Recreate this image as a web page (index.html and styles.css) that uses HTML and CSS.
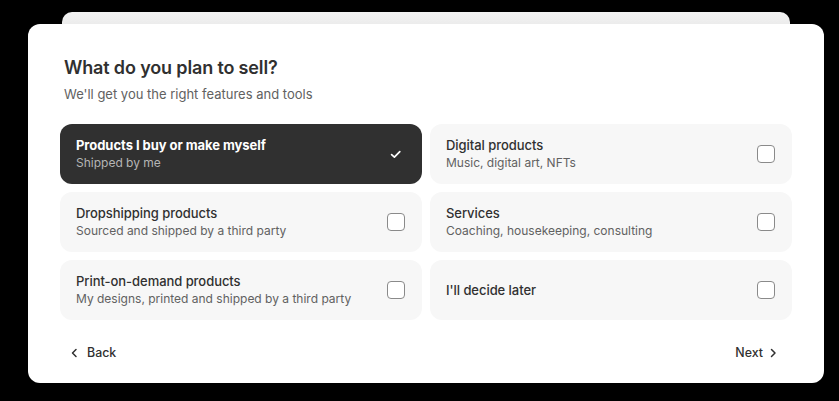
FILE: index.html
```html
<!DOCTYPE html>
<html lang="en">
<head>
<meta charset="utf-8">
<title>What do you plan to sell?</title>
<link rel="stylesheet" href="styles.css">
</head>
<body>
<div class="stack">
  <div class="back-card"></div>
  <div class="card">
    <h1 class="title">What do you plan to sell?</h1>
    <p class="subtitle">We'll get you the right features and tools</p>
    <div class="options">
      <div class="option selected">
        <div class="text">
          <div class="opt-title">Products I buy or make myself</div>
          <div class="opt-sub">Shipped by me</div>
        </div>
        <span class="mark">
          <svg viewBox="0 0 20 20" width="20" height="20"><path d="M5.6 10.6l2.8 2.6 5.4-5.6" fill="none" stroke="#fff" stroke-width="1.7" stroke-linecap="round" stroke-linejoin="round"/></svg>
        </span>
      </div>
      <div class="option">
        <div class="text">
          <div class="opt-title">Digital products</div>
          <div class="opt-sub">Music, digital art, NFTs</div>
        </div>
        <span class="mark"><span class="box"></span></span>
      </div>
      <div class="option">
        <div class="text">
          <div class="opt-title">Dropshipping products</div>
          <div class="opt-sub">Sourced and shipped by a third party</div>
        </div>
        <span class="mark"><span class="box"></span></span>
      </div>
      <div class="option">
        <div class="text">
          <div class="opt-title">Services</div>
          <div class="opt-sub">Coaching, housekeeping, consulting</div>
        </div>
        <span class="mark"><span class="box"></span></span>
      </div>
      <div class="option">
        <div class="text">
          <div class="opt-title">Print-on-demand products</div>
          <div class="opt-sub">My designs, printed and shipped by a third party</div>
        </div>
        <span class="mark"><span class="box"></span></span>
      </div>
      <div class="option">
        <div class="text">
          <div class="opt-title">I'll decide later</div>
        </div>
        <span class="mark"><span class="box"></span></span>
      </div>
    </div>
    <div class="footer">
      <button class="nav back">
        <svg viewBox="0 0 8 12" width="8" height="12"><path d="M6 2.5L2.5 6 6 9.5" fill="none" stroke="#303030" stroke-width="1.5" stroke-linecap="round" stroke-linejoin="round"/></svg>
        <span>Back</span>
      </button>
      <button class="nav next">
        <span>Next</span>
        <svg viewBox="0 0 8 12" width="8" height="12"><path d="M2.5 2.5L6 6 2.5 9.5" fill="none" stroke="#303030" stroke-width="1.5" stroke-linecap="round" stroke-linejoin="round"/></svg>
      </button>
    </div>
  </div>
</div>
</body>
</html>
```
FILE: styles.css
```css
* { box-sizing: border-box; }
html, body { margin: 0; padding: 0; }
body {
  background: #000;
  font-family: Inter, "Noto Sans", "Liberation Sans", sans-serif;
  color: #303030;
  width: 839px;
  height: 401px;
  overflow: hidden;
}
.stack {
  padding: 12px 15px 0 28px;
}
.back-card {
  height: 12px;
  margin: 0 34px 0 34px;
  border-radius: 10px 10px 0 0;
  background: linear-gradient(#f3f3f3, #ececec);
}
.card {
  width: 796px;
  height: 359px;
  background: #fff;
  border-radius: 12px;
  padding: 32px 32px 0 32px;
}
.title {
  margin: 0 0 0 4px;
  font-size: 18px;
  line-height: 24px;
  font-weight: 600;
  letter-spacing: -0.15px;
  color: #303030;
}
.subtitle {
  margin: 4px 0 0 4px;
  font-size: 13px;
  line-height: 20px;
  color: #616161;
}
.options {
  margin-top: 20px;
  display: grid;
  grid-template-columns: 1fr 1fr;
  grid-auto-rows: 60px;
  gap: 8px;
}
.option {
  display: flex;
  align-items: center;
  justify-content: space-between;
  padding: 0 16px;
  background: #f7f7f7;
  border-radius: 12px;
}
.option.selected {
  background: #303030;
}
.text { display: flex; flex-direction: column; }
.opt-title {
  font-size: 13px;
  line-height: 17px;
  font-weight: 550;
  letter-spacing: -0.05px;
  color: #303030;
}
.opt-sub {
  font-size: 12px;
  line-height: 17px;
  color: #616161;
}
.selected .opt-title { color: #fff; font-weight: 650; }
.selected .opt-sub { color: #b5b5b5; }
.mark {
  width: 20px;
  height: 20px;
  display: flex;
  align-items: center;
  justify-content: center;
}
.box {
  width: 18px;
  height: 18px;
  border: 1px solid #8a8a8a;
  border-radius: 4px;
  background: #fff;
}
.footer {
  margin-top: 21px;
  display: flex;
  justify-content: space-between;
  align-items: center;
}
.nav {
  display: flex;
  align-items: center;
  height: 24px;
  padding: 0;
  background: none;
  border: 0;
  font-family: inherit;
  font-size: 12.4px;
  font-weight: 500;
  color: #303030;
}
.nav span { line-height: 20px; }
.back { margin-left: 10px; gap: 9px; }
.next { margin-right: 15px; gap: 6px; }
```
